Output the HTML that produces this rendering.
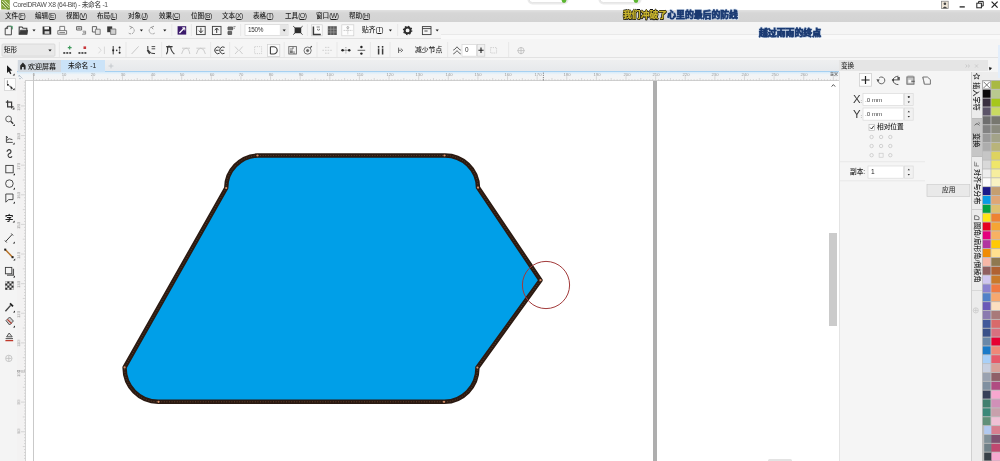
<!DOCTYPE html>
<html lang="zh"><head><meta charset="utf-8"><title>CorelDRAW X8 (64-Bit) - 未命名 -1</title>
<style>
html,body{margin:0;padding:0;background:#f5f5f5;}
body{width:1000px;height:461px;overflow:hidden;position:relative;font-family:"Liberation Sans","Noto Sans CJK SC",sans-serif;color:#333;font-weight:500;}
.a{position:absolute;}
.t{position:absolute;white-space:nowrap;line-height:1;will-change:transform;}
.m{font-size:6.6px;color:#222;}
.m i{font-style:normal;letter-spacing:-0.45px;}
svg{position:absolute;left:0;top:0;overflow:visible;}
</style></head><body>

<div class="a" style="left:0px;top:0px;width:1000px;height:10px;background:#ffffff;"></div>
<div class="a" style="left:0px;top:10px;width:1000px;height:12px;background:linear-gradient(#e2e2e2 0%,#d6d6d6 25%,#d3d3d3 100%);"></div>
<div class="a" style="left:0px;top:22px;width:1000px;height:38px;background:#f5f5f5;"></div>
<div class="a" style="left:0px;top:37.5px;width:1000px;height:0.8px;background:#e0e0e0;"></div>
<div class="a" style="left:441px;top:34px;width:559px;height:3.5px;background:#f9f9f9;border-top:0.6px solid #e9e9e9;"></div>
<div class="a" style="left:0px;top:57.3px;width:1000px;height:0.7px;background:#e2e2e2;"></div>
<div class="a" style="left:0px;top:58px;width:16.8px;height:403px;background:#f4f4f4;"></div>
<div class="a" style="left:16.8px;top:59.6px;width:822.2px;height:12.4px;background:linear-gradient(#eeeff0,#e6e8eb);"></div>
<div class="a" style="left:16.8px;top:71.2px;width:822.2px;height:1.3px;background:#a6d1f2;"></div>
<div class="a" style="left:18px;top:60px;width:42.5px;height:11.6px;background:#d3d9e0;"></div>
<div class="a" style="left:61px;top:60px;width:43.5px;height:11.6px;background:#cbe3f8;"></div>
<div class="a" style="left:16.8px;top:72.4px;width:822.2px;height:8.2px;background:linear-gradient(#d6ebfa 0%,#f1f4f6 30%,#f5f4f4 100%);"></div>
<div class="a" style="left:25.4px;top:80.1px;width:813.6px;height:0.7px;background:#cfcfcf;"></div>
<div class="a" style="left:16.8px;top:80.6px;width:8.6px;height:381px;background:#f3f2f2;"></div>
<div class="a" style="left:25px;top:80.6px;width:0.7px;height:381px;background:#d4d4d4;"></div>
<div class="a" style="left:25.7px;top:80.8px;width:813.3px;height:381px;background:#ffffff;"></div>
<div class="a" style="left:33.2px;top:72.5px;width:0.8px;height:389px;background:#c9c9c9;"></div>
<div class="a" style="left:653.2px;top:80.6px;width:3.9px;height:381px;background:#aeaeae;"></div>
<div class="a" style="left:768px;top:458.6px;width:24px;height:3px;background:#e3e3e3;border-radius:1.5px 1.5px 0 0;"></div>
<div class="a" style="left:829.4px;top:232.8px;width:7.8px;height:93px;background:#cbcbcb;"></div>
<div class="a" style="left:839px;top:58px;width:132.5px;height:403px;background:#f5f5f5;"></div>
<div class="a" style="left:839px;top:60.2px;width:149px;height:11px;background:#e5e5e5;"></div>
<div class="a" style="left:838.6px;top:72px;width:0.8px;height:389px;background:#e4e4e4;"></div>
<div class="a" style="left:971.3px;top:72px;width:10.7px;height:389px;background:#ececec;border-left:0.8px solid #d0d0d0;"></div>
<div class="a" style="left:972px;top:118.6px;width:10px;height:37.5px;background:#c6c6c6;"></div>
<div class="a" style="left:972px;top:117.9px;width:10px;height:0.7px;background:#bdbdbd;"></div>
<div class="a" style="left:972px;top:156.1px;width:10px;height:0.7px;background:#bdbdbd;"></div>
<div class="a" style="left:972px;top:209px;width:10px;height:0.7px;background:#cfcfcf;"></div>
<div class="a" style="left:972px;top:290px;width:10px;height:0.7px;background:#d8d8d8;"></div>
<div class="a" style="left:982px;top:72px;width:18px;height:9px;background:#ededed;"></div>
<div class="a" style="left:982.4px;top:80.4px;width:17.6px;height:381px;background:#bdbdbd;"></div>
<div class="a" style="left:988px;top:58px;width:12px;height:14px;background:#f5f5f5;"></div>
<div class="a" style="left:998px;top:45px;width:2px;height:33px;background:#e3eefb;"></div>
<svg width="1000" height="461" viewBox="0 0 1000 461">
<rect x="982.8" y="80.9" width="7.7" height="7.95" fill="#fff" stroke="#888" stroke-width="0.5"/><rect x="991.4" y="80.9" width="8.6" height="7.95" fill="#a9b944"/><rect x="982.8" y="89.75" width="7.7" height="7.95" fill="#0d0b0c"/><rect x="991.4" y="89.75" width="8.6" height="7.95" fill="#b9c98f"/><rect x="982.8" y="98.6" width="7.7" height="7.95" fill="#3a3040"/><rect x="991.4" y="98.6" width="8.6" height="7.95" fill="#a6c71c"/><rect x="982.8" y="107.45" width="7.7" height="7.95" fill="#5c5468"/><rect x="991.4" y="107.45" width="8.6" height="7.95" fill="#c9da62"/><rect x="982.8" y="116.3" width="7.7" height="7.95" fill="#6e6e6e"/><rect x="991.4" y="116.3" width="8.6" height="7.95" fill="#77776f"/><rect x="982.8" y="125.15" width="7.7" height="7.95" fill="#828282"/><rect x="991.4" y="125.15" width="8.6" height="7.95" fill="#8b8b7f"/><rect x="982.8" y="134" width="7.7" height="7.95" fill="#9a9a9a"/><rect x="991.4" y="134" width="8.6" height="7.95" fill="#a3a389"/><rect x="982.8" y="142.85" width="7.7" height="7.95" fill="#adadad"/><rect x="991.4" y="142.85" width="8.6" height="7.95" fill="#b9b47a"/><rect x="982.8" y="151.7" width="7.7" height="7.95" fill="#c6c6c6"/><rect x="991.4" y="151.7" width="8.6" height="7.95" fill="#ddd35f"/><rect x="982.8" y="160.55" width="7.7" height="7.95" fill="#d9d9d9"/><rect x="991.4" y="160.55" width="8.6" height="7.95" fill="#efe66a"/><rect x="982.8" y="169.4" width="7.7" height="7.95" fill="#ededed"/><rect x="991.4" y="169.4" width="8.6" height="7.95" fill="#f6ee9e"/><rect x="982.8" y="178.25" width="7.7" height="7.95" fill="#fdfdfd"/><rect x="991.4" y="178.25" width="8.6" height="7.95" fill="#f9f3c2"/><rect x="982.8" y="187.1" width="7.7" height="7.95" fill="#1b1b8a"/><rect x="991.4" y="187.1" width="8.6" height="7.95" fill="#c59f70"/><rect x="982.8" y="195.95" width="7.7" height="7.95" fill="#0a9ae4"/><rect x="991.4" y="195.95" width="8.6" height="7.95" fill="#dfa676"/><rect x="982.8" y="204.8" width="7.7" height="7.95" fill="#04a040"/><rect x="991.4" y="204.8" width="8.6" height="7.95" fill="#dfc070"/><rect x="982.8" y="213.65" width="7.7" height="7.95" fill="#ffe516"/><rect x="991.4" y="213.65" width="8.6" height="7.95" fill="#ee8233"/><rect x="982.8" y="222.5" width="7.7" height="7.95" fill="#e6001f"/><rect x="991.4" y="222.5" width="8.6" height="7.95" fill="#f5a534"/><rect x="982.8" y="231.35" width="7.7" height="7.95" fill="#e5007d"/><rect x="991.4" y="231.35" width="8.6" height="7.95" fill="#f7b163"/><rect x="982.8" y="240.2" width="7.7" height="7.95" fill="#b135a0"/><rect x="991.4" y="240.2" width="8.6" height="7.95" fill="#ffc906"/><rect x="982.8" y="249.05" width="7.7" height="7.95" fill="#f08c05"/><rect x="991.4" y="249.05" width="8.6" height="7.95" fill="#ffe08f"/><rect x="982.8" y="257.9" width="7.7" height="7.95" fill="#f7b7a7"/><rect x="991.4" y="257.9" width="8.6" height="7.95" fill="#8f7950"/><rect x="982.8" y="266.75" width="7.7" height="7.95" fill="#905f5f"/><rect x="991.4" y="266.75" width="8.6" height="7.95" fill="#b06232"/><rect x="982.8" y="275.6" width="7.7" height="7.95" fill="#d0c7f0"/><rect x="991.4" y="275.6" width="8.6" height="7.95" fill="#c97a2a"/><rect x="982.8" y="284.45" width="7.7" height="7.95" fill="#8a82d0"/><rect x="991.4" y="284.45" width="8.6" height="7.95" fill="#f07a42"/><rect x="982.8" y="293.3" width="7.7" height="7.95" fill="#5281c8"/><rect x="991.4" y="293.3" width="8.6" height="7.95" fill="#f7a86f"/><rect x="982.8" y="302.15" width="7.7" height="7.95" fill="#6a5ab8"/><rect x="991.4" y="302.15" width="8.6" height="7.95" fill="#fcdfc0"/><rect x="982.8" y="311" width="7.7" height="7.95" fill="#8a7ab0"/><rect x="991.4" y="311" width="8.6" height="7.95" fill="#a87a7a"/><rect x="982.8" y="319.85" width="7.7" height="7.95" fill="#42599a"/><rect x="991.4" y="319.85" width="8.6" height="7.95" fill="#d86a6a"/><rect x="982.8" y="328.7" width="7.7" height="7.95" fill="#3a5088"/><rect x="991.4" y="328.7" width="8.6" height="7.95" fill="#d8707f"/><rect x="982.8" y="337.55" width="7.7" height="7.95" fill="#6a88a8"/><rect x="991.4" y="337.55" width="8.6" height="7.95" fill="#e60032"/><rect x="982.8" y="346.4" width="7.7" height="7.95" fill="#1a7ac8"/><rect x="991.4" y="346.4" width="8.6" height="7.95" fill="#ef8878"/><rect x="982.8" y="355.25" width="7.7" height="7.95" fill="#a9d0f7"/><rect x="991.4" y="355.25" width="8.6" height="7.95" fill="#e65a6a"/><rect x="982.8" y="364.1" width="7.7" height="7.95" fill="#c8d0e0"/><rect x="991.4" y="364.1" width="8.6" height="7.95" fill="#d8a098"/><rect x="982.8" y="372.95" width="7.7" height="7.95" fill="#9aa2b0"/><rect x="991.4" y="372.95" width="8.6" height="7.95" fill="#906068"/><rect x="982.8" y="381.8" width="7.7" height="7.95" fill="#8090a0"/><rect x="991.4" y="381.8" width="8.6" height="7.95" fill="#b04c82"/><rect x="982.8" y="390.65" width="7.7" height="7.95" fill="#384058"/><rect x="991.4" y="390.65" width="8.6" height="7.95" fill="#f7a7cf"/><rect x="982.8" y="399.5" width="7.7" height="7.95" fill="#41806f"/><rect x="991.4" y="399.5" width="8.6" height="7.95" fill="#d090b8"/><rect x="982.8" y="408.35" width="7.7" height="7.95" fill="#3a8878"/><rect x="991.4" y="408.35" width="8.6" height="7.95" fill="#c8a0ac"/><rect x="982.8" y="417.2" width="7.7" height="7.95" fill="#609078"/><rect x="991.4" y="417.2" width="8.6" height="7.95" fill="#f0c0d5"/><rect x="984.2" y="426.05" width="7.7" height="7.95" fill="#b2caf0"/><rect x="991.4" y="426.05" width="8.6" height="7.95" fill="#d87f90"/><rect x="984.2" y="434.9" width="7.7" height="7.95" fill="#809098"/><rect x="991.4" y="434.9" width="8.6" height="7.95" fill="#805070"/><rect x="984.2" y="443.75" width="7.7" height="7.95" fill="#708088"/><rect x="991.4" y="443.75" width="8.6" height="7.95" fill="#c04870"/><rect x="984.2" y="452.6" width="7.7" height="7.95" fill="#384048"/><rect x="991.4" y="452.6" width="8.6" height="7.95" fill="#f7a7cf"/><rect x="984.2" y="461.45" width="7.7" height="7.95" fill="#555"/><rect x="991.4" y="461.45" width="8.6" height="7.95" fill="#999"/>
<path d="M983.6 81.8 L989.8 88 M989.8 81.8 L983.6 88" stroke="#555" stroke-width="0.8" fill="none"/>
<path d="M257.5 155.5 L444.5 155.5 A33 32.6 0 0 1 478 187.6 L540.5 280.2 L477.4 367.6 A33 33.6 0 0 1 444 401.8 L158.5 401.8 A33.6 33.8 0 0 1 124.6 367.4 L226.2 188 A33 32.6 0 0 1 257.5 155.5 Z" fill="#009fe8" stroke="#2a1a12" stroke-width="4.4" stroke-linejoin="round"/>
<path d="M257.5 155.5 L444.5 155.5 A33 32.6 0 0 1 478 187.6 L540.5 280.2 L477.4 367.6 A33 33.6 0 0 1 444 401.8 L158.5 401.8 A33.6 33.8 0 0 1 124.6 367.4 L226.2 188 A33 32.6 0 0 1 257.5 155.5 Z" fill="none" stroke="#8a5a3c" stroke-width="0.7" stroke-dasharray="1 1.6" opacity="0.8"/>
<circle cx="257.5" cy="155.5" r="1.1" fill="#d8906a"/>
<circle cx="444.5" cy="155.5" r="1.1" fill="#d8906a"/>
<circle cx="478" cy="187.6" r="1.1" fill="#d8906a"/>
<circle cx="540.5" cy="280.2" r="1.1" fill="#d8906a"/>
<circle cx="477.4" cy="367.6" r="1.1" fill="#d8906a"/>
<circle cx="444" cy="401.8" r="1.1" fill="#d8906a"/>
<circle cx="158.5" cy="401.8" r="1.1" fill="#d8906a"/>
<circle cx="124.6" cy="367.4" r="1.1" fill="#d8906a"/>
<circle cx="226.2" cy="188" r="1.1" fill="#d8906a"/>
<circle cx="546" cy="285" r="23.6" fill="none" stroke="#a23a3a" stroke-width="1"/>
<path d="M1.2 0 H9.8 V9.4 H1.2 Z" fill="#86a83e"/>
<path d="M1.2 0 L9.8 8.6 V9.4 H7 L1.2 3.4 Z" fill="#6d8f2f"/>
<path d="M2 1 L8.6 7.8 M4.4 0.6 L9.4 5.6 M1.6 3.6 L6.4 8.6" stroke="#e9f2d4" stroke-width="0.9" fill="none"/>
<rect x="528.4" y="-6" width="39.2" height="9.4" rx="4" fill="#fff" stroke="#ececec" stroke-width="2"/>
<rect x="599.4" y="-6" width="41.2" height="9.4" rx="4" fill="#fff" stroke="#ececec" stroke-width="2"/>
<rect x="529" y="-6" width="38" height="8.6" rx="3.5" fill="#fff" stroke="#dcdcdc" stroke-width="0.8"/>
<rect x="600" y="-6" width="40" height="8.6" rx="3.5" fill="#fff" stroke="#dcdcdc" stroke-width="0.8"/>
<circle cx="564" cy="0.6" r="2.3" fill="#5cb531"/><circle cx="636" cy="0.6" r="2.3" fill="#5cb531"/>
<rect x="941.6" y="1.2" width="6.6" height="7.4" fill="#efe6d8" stroke="#7a7a7a" stroke-width="0.7"/>
<circle cx="944.9" cy="3.8" r="1.3" fill="#444"/><path d="M942.6 8.2 Q944.9 4.6 947.2 8.2 Z" fill="#444"/>
<path d="M959.6 6.9 H964.8" stroke="#222" stroke-width="1.3"/>
<rect x="976.8" y="3.2" width="4.6" height="4.6" fill="none" stroke="#222" stroke-width="1"/><path d="M978.6 3 V1.4 H983.2 V6 H981.6" fill="none" stroke="#222" stroke-width="1"/>
<path d="M991.6 1.6 L997.6 7.6 M997.6 1.6 L991.6 7.6" stroke="#222" stroke-width="1.2"/>
<path d="M5.2 34.8 V28.6 L7.6 26.2 H11.4 V34.8 Z M5.2 28.6 H7.6 V26.2" stroke="#3b3b3b" stroke-width="0.9" fill="none" />
<path d="M9.6 26.4 H12.4 V29.4" stroke="#4aa36a" stroke-width="0.9" fill="none" />
<path d="M19.2 34.2 V27 H22 L23 28.2 H26.8 V34.2 Z" stroke="#3b3b3b" stroke-width="1.1" fill="none" />
<path d="M19.2 34.2 L20.6 30.2 H27.6 L26.8 34.2" stroke="#3b3b3b" stroke-width="0.8" fill="#3b3b3b" />
<path d="M32.432 29.4376 L35.568 29.4376 L34 31.476 Z" fill="#1c1c1c"/>
<path d="M42.6 26.4 H50 L51.2 27.6 V34.4 H42.6 Z" fill="#2e2e2e"/>
<rect x="44.4" y="26.8" width="4.6" height="2.6" fill="#f5f5f5"/><rect x="44.6" y="31.2" width="4.8" height="2.6" fill="#d8d8d8"/>
<path d="M59.8 30.6 V26.4 H64.6 V30.6 M57.8 30.6 H66.6 V34.2 H57.8 Z M59.4 32.6 H65" stroke="#6f6f6f" stroke-width="0.9" fill="none" />
<path d="M76.6 26.6 H81.6 V30 H76.6 Z M77.6 28.2 H80.6" stroke="#5a5a5a" stroke-width="0.9" fill="none" />
<path d="M82.6 31.2 H85.6 V34.2 H82 M83 32.8 H85.4" stroke="#777" stroke-width="0.8" fill="none" />
<path d="M92.4 26.6 H96.6 V32 H92.4 Z" stroke="#555" stroke-width="0.9" fill="none" />
<path d="M95.4 29.2 H100.2 V34.4 H95.4 Z" stroke="#777" stroke-width="0.9" fill="#e4e4e4" />
<rect x="107.2" y="26.4" width="5" height="5.8" fill="#3a3a3a"/>
<path d="M110.6 29 H115.8 V34.4 H110.6 Z" stroke="#777" stroke-width="0.9" fill="#d0d0d0" />
<path d="M131.8 27.2 A3.4 3.4 0 1 1 128.2 32.6" stroke="#9a9a9a" stroke-width="1" fill="none" stroke-dasharray="2.2 0.9"/>
<path d="M129.4 26.2 L131.9 27.3 L130.2 29.2" stroke="#8a8a8a" stroke-width="0.9" fill="none" />
<path d="M139.832 29.5376 L142.968 29.5376 L141.4 31.576 Z" fill="#1c1c1c"/>
<path d="M151.6 27.2 A3.4 3.4 0 1 0 155.2 32.6" stroke="#9a9a9a" stroke-width="1" fill="none" stroke-dasharray="2.2 0.9"/>
<path d="M154 26.2 L151.5 27.3 L153.2 29.2" stroke="#8a8a8a" stroke-width="0.9" fill="none" />
<path d="M163.232 29.5376 L166.368 29.5376 L164.8 31.576 Z" fill="#1c1c1c"/>
<path d="M171.8 24 V36" stroke="#e2e2e2" stroke-width="0.7"/>
<rect x="177.6" y="26.2" width="8.6" height="8.4" fill="#3b1a6b"/>
<path d="M179.4 33 L184.6 27.8" stroke="#fff" stroke-width="1.3" fill="none" />
<path d="M182.2 27.8 H184.8 V30.4" stroke="#fff" stroke-width="0.9" fill="none" />
<path d="M191.4 24 V36" stroke="#e2e2e2" stroke-width="0.7"/>
<rect x="196.6" y="26.4" width="8.6" height="8.2" stroke="#3b3b3b" stroke-width="0.9" fill="none" />
<path d="M200.9 27.8 V32.4 M199 30.6 L200.9 32.8 L202.8 30.6" stroke="#3b3b3b" stroke-width="1" fill="none" />
<rect x="212.4" y="26.4" width="8.6" height="8.2" stroke="#3b3b3b" stroke-width="0.9" fill="none" />
<path d="M216.7 33 V28.4 M214.8 30.2 L216.7 28 L218.6 30.2" stroke="#3b3b3b" stroke-width="1" fill="none" />
<path d="M228 27 H232.6 V29.8 H228 Z M228 31.4 H231.6 V34.4 H228 Z" stroke="#555" stroke-width="0.9" fill="#6a6a6a" />
<path d="M233.4 26.6 H235.6 M233.4 28.2 H235" stroke="#777" stroke-width="0.8" fill="none" />
<path d="M240.6 24 V36" stroke="#e2e2e2" stroke-width="0.7"/>
<rect x="245" y="24.6" width="43" height="11" fill="#fff" stroke="#d4d4d4" stroke-width="0.7"/>
<rect x="279.8" y="25" width="8" height="10.3" fill="#e6e6e6"/>
<path d="M282.632 29.4376 L285.768 29.4376 L284.2 31.476 Z" fill="#1c1c1c"/>
<rect x="294.6" y="27.4" width="6.6" height="5.8" fill="#2c2c2c"/>
<path d="M293.2 26.2 L295 27.8 M302.6 26.2 L300.8 27.8 M293.2 34.6 L295 33 M302.6 34.6 L300.8 33" stroke="#3b3b3b" stroke-width="0.9" fill="none" />
<path d="M307.4 24 V36" stroke="#e2e2e2" stroke-width="0.7"/>
<rect x="311.4" y="24.8" width="10.8" height="11" fill="#fdfdfd" stroke="#cfcfcf" stroke-width="0.7"/>
<path d="M313.4 26.4 V34.4 H320.8" stroke="#3b3b3b" stroke-width="1.5" fill="none" />
<path d="M316.6 27 H319.8 M317.6 28.8 A1 1 0 1 0 319.4 28.8" stroke="#666" stroke-width="0.8" fill="none" />
<rect x="327.8" y="26.2" width="9" height="8.8" fill="#5a5a5a"/>
<path d="M330.8 26.2 V35 M333.8 26.2 V35 M327.8 29.2 H336.8 M327.8 32 H336.8" stroke="#a8a8a8" stroke-width="0.6" fill="none" />
<rect x="341.8" y="24.8" width="12" height="11" fill="#fdfdfd" stroke="#cfcfcf" stroke-width="0.7"/>
<path d="M347.8 26.4 V34.6 M343.6 30.4 H352.4" stroke="#b4b4b4" stroke-width="0.8" fill="none" stroke-dasharray="1.2 0.8"/>
<circle cx="347.8" cy="27.6" r="1" stroke="#9a9a9a" stroke-width="0.7" fill="none"/>
<path d="M388.832 29.5376 L391.968 29.5376 L390.4 31.576 Z" fill="#1c1c1c"/>
<path d="M397.6 24 V36" stroke="#e2e2e2" stroke-width="0.7"/>
<circle cx="407.6" cy="30.4" r="2.9" stroke="#2c2c2c" stroke-width="1.9" fill="none"/>
<circle cx="407.6" cy="30.4" r="4.1" fill="none" stroke="#2c2c2c" stroke-width="1.3" stroke-dasharray="1.4 1.82"/>
<rect x="422.4" y="26.6" width="8.6" height="8" stroke="#3b3b3b" stroke-width="0.9" fill="none" />
<path d="M422.4 28.6 H431 M424.4 31 H427.6" stroke="#3b3b3b" stroke-width="0.9" fill="none" />
<path d="M435.632 29.5376 L438.768 29.5376 L437.2 31.576 Z" fill="#1c1c1c"/>
<rect x="2" y="44" width="53" height="12.2" rx="1" fill="#e9e9e9" stroke="#d2d2d2" stroke-width="0.7"/>
<path d="M48.32 49.376 L51.68 49.376 L50 51.56 Z" fill="#1c1c1c"/>
<path d="M59.4 42 V57" stroke="#e2e2e2" stroke-width="0.7"/>
<path d="M69.7 45.8 V49.6 M67.8 47.7 H71.6" stroke="#3f9a5c" stroke-width="1.2" fill="none" />
<rect x="63.35" y="52.1" width="1.7" height="1.7" fill="#3a3a3a"/>
<rect x="66.35" y="52.1" width="1.7" height="1.7" fill="#3a3a3a"/>
<rect x="69.35" y="52.1" width="1.7" height="1.7" fill="#3a3a3a"/>
<path d="M63.2 53 H71.2" stroke="#6a6a6a" stroke-width="0.5" fill="none" />
<rect x="83.5" y="46.4" width="2.6" height="2.6" fill="#c8363a"/>
<rect x="78.55" y="52.1" width="1.7" height="1.7" fill="#3a3a3a"/>
<rect x="81.55" y="52.1" width="1.7" height="1.7" fill="#3a3a3a"/>
<rect x="84.55" y="52.1" width="1.7" height="1.7" fill="#3a3a3a"/>
<path d="M78.4 53 H86.4" stroke="#6a6a6a" stroke-width="0.5" fill="none" />
<path d="M98.4 47 L101.2 50.2 L98.4 53.4 M104.4 46.6 V54" stroke="#d6d6d6" stroke-width="0.9" fill="none" />
<path d="M113.2 46 V54.4" stroke="#3b3b3b" stroke-width="1" fill="none" />
<rect x="112.3" y="49.4" width="1.8" height="1.8" fill="#222"/>
<circle cx="116.7" cy="50.4" r="0.8" fill="#333"/><circle cx="119.6" cy="47.4" r="1" fill="#222"/><circle cx="119.6" cy="52.8" r="1" fill="#222"/>
<path d="M119.6 48.6 V51.6" stroke="#555" stroke-width="0.7" fill="none" />
<path d="M126 42 V57" stroke="#e2e2e2" stroke-width="0.7"/>
<path d="M131.6 54 L138.6 46.4" stroke="#c8c8c8" stroke-width="1" fill="none" />
<path d="M147.8 46 V49.4 L149.4 51.4 Q151 54 155 53.6" stroke="#3b3b3b" stroke-width="1" fill="none" />
<path d="M151.6 46.6 H155.2 M151.6 48.8 H155.2" stroke="#3b3b3b" stroke-width="0.9" fill="none" />
<path d="M147.4 50 L149.8 53.8" stroke="#3b3b3b" stroke-width="1.6" fill="none" />
<path d="M161.6 42 V57" stroke="#e2e2e2" stroke-width="0.7"/>
<path d="M166.2 46.6 H172.6 M167.4 46.6 Q168.4 51 166.4 54.2 M170.8 46.6 Q170.2 50 174.4 54.2 M169 45.6 V48" stroke="#3b3b3b" stroke-width="1.1" fill="none" />
<path d="M181.6 54 Q183 48.2 186 48.2 Q189 48.2 189.8 54 M182 48.2 H190" stroke="#c8c8c8" stroke-width="0.9" fill="none" />
<path d="M196.4 54 Q197.6 48.2 200.8 48.2 Q204 48.2 205.4 54 M196.4 48.2 H205.4" stroke="#c8c8c8" stroke-width="0.9" fill="none" />
<path d="M210.6 42 V57" stroke="#e2e2e2" stroke-width="0.7"/>
<path d="M219.6 47.4 A3.2 3.4 0 1 0 219.6 53.2 M215.6 50.3 H218.6" stroke="#3b3b3b" stroke-width="1" fill="none" />
<path d="M224.6 47.4 A3.2 3.4 0 1 0 224.6 53.2 M220.8 50.3 H223.6" stroke="#3b3b3b" stroke-width="1" fill="none" />
<path d="M229.6 42 V57" stroke="#e2e2e2" stroke-width="0.7"/>
<path d="M235 46.6 L238.4 50.3 L235 54 M242.6 46.6 L239.4 50.3 L242.6 54" stroke="#c8c8c8" stroke-width="0.9" fill="none" />
<rect x="254.6" y="46.6" width="7" height="7" fill="none" stroke="#c8c8c8" stroke-width="0.8" stroke-dasharray="1.2 1"/>
<rect x="267.6" y="44.4" width="12.2" height="12" fill="#fbfbfb" stroke="#cfcfcf" stroke-width="0.7"/>
<path d="M270.4 46.8 V54 M270.4 46.8 H273.6 A3.6 3.6 0 0 1 273.6 54 H270.4" stroke="#3b3b3b" stroke-width="1.1" fill="none" />
<path d="M284.2 42 V57" stroke="#e2e2e2" stroke-width="0.7"/>
<rect x="288.8" y="46.6" width="7.6" height="7.4" stroke="#666" stroke-width="0.9" fill="none" />
<path d="M290 49 H293 V46.8 M294 54 V51.2" stroke="#555" stroke-width="0.8" fill="none" />
<rect x="289.8" y="50.4" width="3" height="2.8" fill="#777"/>
<circle cx="307.6" cy="50.6" r="3.6" stroke="#666" stroke-width="0.9" fill="none"/>
<circle cx="307.6" cy="50.6" r="1.1" stroke="#555" stroke-width="0.8" fill="#666"/>
<path d="M310.4 47.6 L311.8 46.2" stroke="#444" stroke-width="1.1" fill="none" />
<path d="M317 42 V57" stroke="#e2e2e2" stroke-width="0.7"/>
<path d="M322.4 50.3 H332.4 M325 47.4 H330 M325 53.2 H330" stroke="#c8c8c8" stroke-width="0.8" fill="none" stroke-dasharray="1.6 1"/>
<path d="M337 42 V57" stroke="#e2e2e2" stroke-width="0.7"/>
<path d="M341.2 50.3 H350.6" stroke="#666" stroke-width="0.7" fill="none" />
<circle cx="342.6" cy="50.3" r="1.2" fill="#222"/><circle cx="349.2" cy="50.3" r="1.2" fill="#222"/>
<path d="M345.9 47 V53.6" stroke="#777" stroke-width="0.7" fill="none" stroke-dasharray="1 0.8"/>
<path d="M357.6 50.3 H365.2" stroke="#555" stroke-width="0.9" fill="none" />
<circle cx="361.4" cy="47" r="1.2" fill="#222"/><circle cx="361.4" cy="53.6" r="1.2" fill="#222"/>
<path d="M370.4 42 V57" stroke="#e2e2e2" stroke-width="0.7"/>
<path d="M378.6 48.6 V54.6 M382.6 48.6 V54.6" stroke="#3b3b3b" stroke-width="1.5" fill="none" />
<circle cx="378.6" cy="46.8" r="0.9" fill="#222"/><circle cx="382.6" cy="46.8" r="0.9" fill="#222"/>
<path d="M390 42 V57" stroke="#e2e2e2" stroke-width="0.7"/>
<path d="M398.6 47.6 V53 M398.6 50.3 H401 M400.8 48.6 L402.8 50.3 L400.8 52" stroke="#555" stroke-width="0.9" fill="none" />
<path d="M447.6 42 V57" stroke="#e2e2e2" stroke-width="0.7"/>
<path d="M453.2 50.2 Q455 49.6 457 46.8 Q459 49.6 460.8 50.2 M453.2 54 Q455 53.4 457 50.6 Q459 53.4 460.8 54" stroke="#555" stroke-width="0.9" fill="none" />
<rect x="462" y="44.6" width="14.6" height="11.6" fill="#fff" stroke="#d6d6d6" stroke-width="0.7"/>
<rect x="477.2" y="44.6" width="7.6" height="11.6" fill="#f0f0f0" stroke="#cfcfcf" stroke-width="0.7"/>
<path d="M481 47.6 V53 M478.4 50.3 H483.6" stroke="#222" stroke-width="1.1" fill="none" />
<rect x="490.6" y="47.6" width="6" height="5.4" fill="none" stroke="#c4c4c4" stroke-width="0.8" stroke-dasharray="1.2 1"/>
<path d="M508.6 42 V57" stroke="#e2e2e2" stroke-width="0.7"/>
<circle cx="521" cy="50.6" r="3.1" stroke="#bdbdbd" stroke-width="0.8" fill="none"/>
<path d="M521 47 V54.2 M517.4 50.6 H524.6" stroke="#bdbdbd" stroke-width="0.8" fill="none" />
<path d="M20.2 65.6 L22.9 62.6 L25.6 65.6 V69.4 H23.8 V67 H22 V69.4 H20.2 Z" fill="#2a2a2a"/>
<path d="M111 63.6 V68.4 M108.6 66 H113.4" stroke="#c2c6ca" stroke-width="0.9" fill="none" />
<path d="M33.60 76.2 V80.4 M36.56 79.2 V80.4 M39.52 79.2 V80.4 M42.49 79.2 V80.4 M45.45 79.2 V80.4 M48.41 78.0 V80.4 M51.37 79.2 V80.4 M54.33 79.2 V80.4 M57.30 79.2 V80.4 M60.26 79.2 V80.4 M63.22 76.2 V80.4 M66.18 79.2 V80.4 M69.14 79.2 V80.4 M72.11 79.2 V80.4 M75.07 79.2 V80.4 M78.03 78.0 V80.4 M80.99 79.2 V80.4 M83.95 79.2 V80.4 M86.92 79.2 V80.4 M89.88 79.2 V80.4 M92.84 76.2 V80.4 M95.80 79.2 V80.4 M98.76 79.2 V80.4 M101.73 79.2 V80.4 M104.69 79.2 V80.4 M107.65 78.0 V80.4 M110.61 79.2 V80.4 M113.57 79.2 V80.4 M116.54 79.2 V80.4 M119.50 79.2 V80.4 M122.46 76.2 V80.4 M125.42 79.2 V80.4 M128.38 79.2 V80.4 M131.35 79.2 V80.4 M134.31 79.2 V80.4 M137.27 78.0 V80.4 M140.23 79.2 V80.4 M143.19 79.2 V80.4 M146.16 79.2 V80.4 M149.12 79.2 V80.4 M152.08 76.2 V80.4 M155.04 79.2 V80.4 M158.00 79.2 V80.4 M160.97 79.2 V80.4 M163.93 79.2 V80.4 M166.89 78.0 V80.4 M169.85 79.2 V80.4 M172.81 79.2 V80.4 M175.78 79.2 V80.4 M178.74 79.2 V80.4 M181.70 76.2 V80.4 M184.66 79.2 V80.4 M187.62 79.2 V80.4 M190.59 79.2 V80.4 M193.55 79.2 V80.4 M196.51 78.0 V80.4 M199.47 79.2 V80.4 M202.43 79.2 V80.4 M205.40 79.2 V80.4 M208.36 79.2 V80.4 M211.32 76.2 V80.4 M214.28 79.2 V80.4 M217.24 79.2 V80.4 M220.21 79.2 V80.4 M223.17 79.2 V80.4 M226.13 78.0 V80.4 M229.09 79.2 V80.4 M232.05 79.2 V80.4 M235.02 79.2 V80.4 M237.98 79.2 V80.4 M240.94 76.2 V80.4 M243.90 79.2 V80.4 M246.86 79.2 V80.4 M249.83 79.2 V80.4 M252.79 79.2 V80.4 M255.75 78.0 V80.4 M258.71 79.2 V80.4 M261.67 79.2 V80.4 M264.64 79.2 V80.4 M267.60 79.2 V80.4 M270.56 76.2 V80.4 M273.52 79.2 V80.4 M276.48 79.2 V80.4 M279.45 79.2 V80.4 M282.41 79.2 V80.4 M285.37 78.0 V80.4 M288.33 79.2 V80.4 M291.29 79.2 V80.4 M294.26 79.2 V80.4 M297.22 79.2 V80.4 M300.18 76.2 V80.4 M303.14 79.2 V80.4 M306.10 79.2 V80.4 M309.07 79.2 V80.4 M312.03 79.2 V80.4 M314.99 78.0 V80.4 M317.95 79.2 V80.4 M320.91 79.2 V80.4 M323.88 79.2 V80.4 M326.84 79.2 V80.4 M329.80 76.2 V80.4 M332.76 79.2 V80.4 M335.72 79.2 V80.4 M338.69 79.2 V80.4 M341.65 79.2 V80.4 M344.61 78.0 V80.4 M347.57 79.2 V80.4 M350.53 79.2 V80.4 M353.50 79.2 V80.4 M356.46 79.2 V80.4 M359.42 76.2 V80.4 M362.38 79.2 V80.4 M365.34 79.2 V80.4 M368.31 79.2 V80.4 M371.27 79.2 V80.4 M374.23 78.0 V80.4 M377.19 79.2 V80.4 M380.15 79.2 V80.4 M383.12 79.2 V80.4 M386.08 79.2 V80.4 M389.04 76.2 V80.4 M392.00 79.2 V80.4 M394.96 79.2 V80.4 M397.93 79.2 V80.4 M400.89 79.2 V80.4 M403.85 78.0 V80.4 M406.81 79.2 V80.4 M409.77 79.2 V80.4 M412.74 79.2 V80.4 M415.70 79.2 V80.4 M418.66 76.2 V80.4 M421.62 79.2 V80.4 M424.58 79.2 V80.4 M427.55 79.2 V80.4 M430.51 79.2 V80.4 M433.47 78.0 V80.4 M436.43 79.2 V80.4 M439.39 79.2 V80.4 M442.36 79.2 V80.4 M445.32 79.2 V80.4 M448.28 76.2 V80.4 M451.24 79.2 V80.4 M454.20 79.2 V80.4 M457.17 79.2 V80.4 M460.13 79.2 V80.4 M463.09 78.0 V80.4 M466.05 79.2 V80.4 M469.01 79.2 V80.4 M471.98 79.2 V80.4 M474.94 79.2 V80.4 M477.90 76.2 V80.4 M480.86 79.2 V80.4 M483.82 79.2 V80.4 M486.79 79.2 V80.4 M489.75 79.2 V80.4 M492.71 78.0 V80.4 M495.67 79.2 V80.4 M498.63 79.2 V80.4 M501.60 79.2 V80.4 M504.56 79.2 V80.4 M507.52 76.2 V80.4 M510.48 79.2 V80.4 M513.44 79.2 V80.4 M516.41 79.2 V80.4 M519.37 79.2 V80.4 M522.33 78.0 V80.4 M525.29 79.2 V80.4 M528.25 79.2 V80.4 M531.22 79.2 V80.4 M534.18 79.2 V80.4 M537.14 76.2 V80.4 M540.10 79.2 V80.4 M543.06 79.2 V80.4 M546.03 79.2 V80.4 M548.99 79.2 V80.4 M551.95 78.0 V80.4 M554.91 79.2 V80.4 M557.87 79.2 V80.4 M560.84 79.2 V80.4 M563.80 79.2 V80.4 M566.76 76.2 V80.4 M569.72 79.2 V80.4 M572.68 79.2 V80.4 M575.65 79.2 V80.4 M578.61 79.2 V80.4 M581.57 78.0 V80.4 M584.53 79.2 V80.4 M587.49 79.2 V80.4 M590.46 79.2 V80.4 M593.42 79.2 V80.4 M596.38 76.2 V80.4 M599.34 79.2 V80.4 M602.30 79.2 V80.4 M605.27 79.2 V80.4 M608.23 79.2 V80.4 M611.19 78.0 V80.4 M614.15 79.2 V80.4 M617.11 79.2 V80.4 M620.08 79.2 V80.4 M623.04 79.2 V80.4 M626.00 76.2 V80.4 M628.96 79.2 V80.4 M631.92 79.2 V80.4 M634.89 79.2 V80.4 M637.85 79.2 V80.4 M640.81 78.0 V80.4 M643.77 79.2 V80.4 M646.73 79.2 V80.4 M649.70 79.2 V80.4 M652.66 79.2 V80.4 M655.62 76.2 V80.4 M658.58 79.2 V80.4 M661.54 79.2 V80.4 M664.51 79.2 V80.4 M667.47 79.2 V80.4 M670.43 78.0 V80.4 M673.39 79.2 V80.4 M676.35 79.2 V80.4 M679.32 79.2 V80.4 M682.28 79.2 V80.4 M685.24 76.2 V80.4 M688.20 79.2 V80.4 M691.16 79.2 V80.4 M694.13 79.2 V80.4 M697.09 79.2 V80.4 M700.05 78.0 V80.4 M703.01 79.2 V80.4 M705.97 79.2 V80.4 M708.94 79.2 V80.4 M711.90 79.2 V80.4 M714.86 76.2 V80.4 M717.82 79.2 V80.4 M720.78 79.2 V80.4 M723.75 79.2 V80.4 M726.71 79.2 V80.4 M729.67 78.0 V80.4 M732.63 79.2 V80.4 M735.59 79.2 V80.4 M738.56 79.2 V80.4 M741.52 79.2 V80.4 M744.48 76.2 V80.4 M747.44 79.2 V80.4 M750.40 79.2 V80.4 M753.37 79.2 V80.4 M756.33 79.2 V80.4 M759.29 78.0 V80.4 M762.25 79.2 V80.4 M765.21 79.2 V80.4 M768.18 79.2 V80.4 M771.14 79.2 V80.4 M774.10 76.2 V80.4 M777.06 79.2 V80.4 M780.02 79.2 V80.4 M782.99 79.2 V80.4 M785.95 79.2 V80.4 M788.91 78.0 V80.4 M791.87 79.2 V80.4 M794.83 79.2 V80.4 M797.80 79.2 V80.4 M800.76 79.2 V80.4 M803.72 76.2 V80.4 M806.68 79.2 V80.4 M809.64 79.2 V80.4 M812.61 79.2 V80.4 M815.57 79.2 V80.4 M818.53 78.0 V80.4 M821.49 79.2 V80.4 M824.45 79.2 V80.4 M827.42 79.2 V80.4 M830.38 79.2 V80.4 M833.34 76.2 V80.4 M836.30 79.2 V80.4" stroke="#b9b9b9" stroke-width="0.5" fill="none" />
<path d="M24.0 82.22 H25.2 M24.0 85.19 H25.2 M24.0 88.15 H25.2 M22.8 91.11 H25.2 M24.0 94.07 H25.2 M24.0 97.03 H25.2 M24.0 100.00 H25.2 M24.0 102.96 H25.2 M21.0 105.92 H25.2 M24.0 108.88 H25.2 M24.0 111.84 H25.2 M24.0 114.81 H25.2 M24.0 117.77 H25.2 M22.8 120.73 H25.2 M24.0 123.69 H25.2 M24.0 126.65 H25.2 M24.0 129.62 H25.2 M24.0 132.58 H25.2 M21.0 135.54 H25.2 M24.0 138.50 H25.2 M24.0 141.46 H25.2 M24.0 144.43 H25.2 M24.0 147.39 H25.2 M22.8 150.35 H25.2 M24.0 153.31 H25.2 M24.0 156.27 H25.2 M24.0 159.24 H25.2 M24.0 162.20 H25.2 M21.0 165.16 H25.2 M24.0 168.12 H25.2 M24.0 171.08 H25.2 M24.0 174.05 H25.2 M24.0 177.01 H25.2 M22.8 179.97 H25.2 M24.0 182.93 H25.2 M24.0 185.89 H25.2 M24.0 188.86 H25.2 M24.0 191.82 H25.2 M21.0 194.78 H25.2 M24.0 197.74 H25.2 M24.0 200.70 H25.2 M24.0 203.67 H25.2 M24.0 206.63 H25.2 M22.8 209.59 H25.2 M24.0 212.55 H25.2 M24.0 215.51 H25.2 M24.0 218.48 H25.2 M24.0 221.44 H25.2 M21.0 224.40 H25.2 M24.0 227.36 H25.2 M24.0 230.32 H25.2 M24.0 233.29 H25.2 M24.0 236.25 H25.2 M22.8 239.21 H25.2 M24.0 242.17 H25.2 M24.0 245.13 H25.2 M24.0 248.10 H25.2 M24.0 251.06 H25.2 M21.0 254.02 H25.2 M24.0 256.98 H25.2 M24.0 259.94 H25.2 M24.0 262.91 H25.2 M24.0 265.87 H25.2 M22.8 268.83 H25.2 M24.0 271.79 H25.2 M24.0 274.75 H25.2 M24.0 277.72 H25.2 M24.0 280.68 H25.2 M21.0 283.64 H25.2 M24.0 286.60 H25.2 M24.0 289.56 H25.2 M24.0 292.53 H25.2 M24.0 295.49 H25.2 M22.8 298.45 H25.2 M24.0 301.41 H25.2 M24.0 304.37 H25.2 M24.0 307.34 H25.2 M24.0 310.30 H25.2 M21.0 313.26 H25.2 M24.0 316.22 H25.2 M24.0 319.18 H25.2 M24.0 322.15 H25.2 M24.0 325.11 H25.2 M22.8 328.07 H25.2 M24.0 331.03 H25.2 M24.0 333.99 H25.2 M24.0 336.96 H25.2 M24.0 339.92 H25.2 M21.0 342.88 H25.2 M24.0 345.84 H25.2 M24.0 348.80 H25.2 M24.0 351.77 H25.2 M24.0 354.73 H25.2 M22.8 357.69 H25.2 M24.0 360.65 H25.2 M24.0 363.61 H25.2 M24.0 366.58 H25.2 M24.0 369.54 H25.2 M21.0 372.50 H25.2 M24.0 375.46 H25.2 M24.0 378.42 H25.2 M24.0 381.39 H25.2 M24.0 384.35 H25.2 M22.8 387.31 H25.2 M24.0 390.27 H25.2 M24.0 393.23 H25.2 M24.0 396.20 H25.2 M24.0 399.16 H25.2 M21.0 402.12 H25.2 M24.0 405.08 H25.2 M24.0 408.04 H25.2 M24.0 411.01 H25.2 M24.0 413.97 H25.2 M22.8 416.93 H25.2 M24.0 419.89 H25.2 M24.0 422.85 H25.2 M24.0 425.82 H25.2 M24.0 428.78 H25.2 M21.0 431.74 H25.2 M24.0 434.70 H25.2 M24.0 437.66 H25.2 M24.0 440.63 H25.2 M24.0 443.59 H25.2 M22.8 446.55 H25.2 M24.0 449.51 H25.2 M24.0 452.47 H25.2 M24.0 455.44 H25.2 M24.0 458.40 H25.2" stroke="#b9b9b9" stroke-width="0.5" fill="none" />
<path d="M543.4 72.6 V80.4" stroke="#555" stroke-width="0.7" fill="none" stroke-dasharray="1.2 1"/>
<path d="M17 371 H25.2" stroke="#555" stroke-width="0.7" fill="none" stroke-dasharray="1.2 1"/>
<path d="M19 75 L22.6 78.6 M19 78.6 H21 M19 75 V77" stroke="#9ab" stroke-width="0.6" fill="none" />
<path d="M831.6 86.6 L833.4 84.6 L835.2 86.6" stroke="#555" stroke-width="1" fill="none" />
<path d="M7 65.2 L7 73 L8.8 71.4 L10.2 74.2 L11.4 73.6 L10 70.8 L12.4 70.6 Z" fill="#1e1e1e"/>
<path d="M14.6 75.6 L12.6 75.6 L14.6 73.6 Z" fill="#222"/>
<rect x="4.6" y="78.4" width="11" height="12" fill="#fdfdfd" stroke="#cfcfcf" stroke-width="0.7"/>
<path d="M7.4 80.4 Q6.6 84 8.8 85.6 L12 88.4" stroke="#666" stroke-width="0.8" fill="none" />
<path d="M10.4 85.6 L13.4 88.8 L11.6 88.6 L11 90.2 Z" fill="#222"/><rect x="7" y="84" width="1.6" height="1.6" fill="#222"/>
<path d="M14.6 90 L12.6 90 L14.6 88 Z" fill="#222"/>
<path d="M7.6 100.2 V106.8 H13.6 M5.8 102.2 H11.6 V108.6" stroke="#3b3b3b" stroke-width="1.2" fill="none" />
<path d="M14.4 109.4 L12.4 109.4 L14.4 107.4 Z" fill="#222"/>
<circle cx="8.6" cy="119" r="2.9" stroke="#555" stroke-width="0.9" fill="none"/>
<path d="M10.8 121.2 L13.2 123.8" stroke="#333" stroke-width="1.3" fill="none" />
<path d="M14.8 126 L12.8 126 L14.8 124 Z" fill="#222"/>
<path d="M6.4 136 V142.4 H12.8 M6.4 136 L8 138.2 M6.6 140.4 Q9 137.6 12.4 139.6" stroke="#3b3b3b" stroke-width="0.9" fill="none" />
<path d="M14.6 144.4 L12.6 144.4 L14.6 142.4 Z" fill="#222"/>
<path d="M6.8 151.6 Q9 148.2 10.8 150.6 Q11.6 152.6 9 153.8 Q7 155.4 9.2 157.2 Q11 158 12 156.4" stroke="#3b3b3b" stroke-width="1.1" fill="none" />
<rect x="5.8" y="165.4" width="7.4" height="7.4" stroke="#3b3b3b" stroke-width="0.9" fill="none" />
<path d="M15 175.2 L13 175.2 L15 173.2 Z" fill="#222"/>
<circle cx="9.4" cy="183.6" r="3.8" stroke="#3b3b3b" stroke-width="0.9" fill="none"/>
<path d="M15 189.4 L13 189.4 L15 187.4 Z" fill="#222"/>
<path d="M5.8 194 H13 V199.6 H8.6 L5.8 202.2 Z" stroke="#3b3b3b" stroke-width="0.9" fill="none" />
<path d="M15 203.6 L13 203.6 L15 201.6 Z" fill="#222"/>
<path d="M14.6 222.4 L12.6 222.4 L14.6 220.4 Z" fill="#222"/>
<path d="M5.6 241.6 L12.2 234.4" stroke="#3b3b3b" stroke-width="1" fill="none" />
<path d="M4.8 240.4 L6.8 242.6 M11.2 233.4 L13.2 235.6" stroke="#3b3b3b" stroke-width="0.8" fill="none" />
<path d="M14.8 243.4 L12.8 243.4 L14.8 241.4 Z" fill="#222"/>
<path d="M5.2 249.6 L12.6 257.2" stroke="#b8742a" stroke-width="1.5" fill="none" />
<rect x="4.2" y="248.6" width="2" height="2" fill="#222"/><rect x="11.6" y="256.2" width="2" height="2" fill="#222"/>
<path d="M15.2 260.4 L13.2 260.4 L15.2 258.4 Z" fill="#222"/>
<rect x="5.4" y="267.4" width="6.4" height="6.4" stroke="#3b3b3b" stroke-width="0.9" fill="#f4f4f4" />
<path d="M7 275.2 H13.4 V268.8" stroke="#555" stroke-width="1.3" fill="none" />
<path d="M15 277.6 L13 277.6 L15 275.6 Z" fill="#222"/>
<rect x="5.2" y="281.4" width="8.4" height="8.4" fill="#2a2a2a"/>
<rect x="5.2" y="281.4" width="2.1" height="2.1" fill="#e8e8e8"/>
<rect x="5.2" y="285.6" width="2.1" height="2.1" fill="#e8e8e8"/>
<rect x="7.3" y="283.5" width="2.1" height="2.1" fill="#e8e8e8"/>
<rect x="7.3" y="287.7" width="2.1" height="2.1" fill="#e8e8e8"/>
<rect x="9.4" y="281.4" width="2.1" height="2.1" fill="#e8e8e8"/>
<rect x="9.4" y="285.6" width="2.1" height="2.1" fill="#e8e8e8"/>
<rect x="11.5" y="283.5" width="2.1" height="2.1" fill="#e8e8e8"/>
<rect x="11.5" y="287.7" width="2.1" height="2.1" fill="#e8e8e8"/>
<path d="M5.4 311.2 L10.6 305.4" stroke="#444" stroke-width="1.4" fill="none" />
<path d="M10 303.4 L13 306.4" stroke="#222" stroke-width="1.8" fill="none" />
<path d="M15 312.6 L13 312.6 L15 310.6 Z" fill="#222"/>
<path d="M6 320.6 L9.6 317 L13.4 321 L9.6 325 Z" stroke="#444" stroke-width="0.9" fill="#cfcfcf" />
<path d="M7.4 319.4 L11.6 323.6" stroke="#c0392b" stroke-width="1.1" fill="none" />
<path d="M15 327.6 L13 327.6 L15 325.6 Z" fill="#222"/>
<path d="M5.6 338.6 H13 M6.6 336.8 L9.2 333 L12.2 336.8 Z" stroke="#444" stroke-width="0.9" fill="#e0e0e0" />
<path d="M5.4 340.6 H13.2" stroke="#c0392b" stroke-width="1.3" fill="none" />
<circle cx="8.8" cy="358.4" r="3.2" stroke="#bdbdbd" stroke-width="0.8" fill="none"/>
<path d="M8.8 355.6 V361.2 M6 358.4 H11.6" stroke="#bdbdbd" stroke-width="0.8" fill="none" />
<path d="M965.6 64.6 L967.2 66 L965.6 67.4 M968 64.6 L969.6 66 L968 67.4" stroke="#bdbdbd" stroke-width="0.7" fill="none" />
<path d="M975 64.4 L978 67.6 M978 64.4 L975 67.6" stroke="#c4c4c4" stroke-width="0.7" fill="none" />
<path d="M988.832 67.7376 L991.968 67.7376 L990.4 69.776 Z" fill="#1c1c1c"/>
<path d="M989.4 66.8 L991.6 68.6 L989.4 70.4 Z" fill="#222"/>
<rect x="859.4" y="73.6" width="12.2" height="12.6" fill="#fdfdfd" stroke="#c9c9c9" stroke-width="0.7"/>
<path d="M865.5 76 V84 M861.4 80 H869.6" stroke="#222" stroke-width="1.2" fill="none" />
<path d="M879.2 77.8 A3.4 3.4 0 1 1 878.1 81.2" stroke="#555" stroke-width="0.9" fill="none" />
<path d="M876.4 79.3 L879.7 79.5 L877.9 81.9 Z" fill="#444"/>
<path d="M898.4 76.2 A5.4 4.2 0 0 0 898.4 84.6" stroke="#555" stroke-width="1" fill="none" />
<path d="M892 79.9 H899.6" stroke="#444" stroke-width="0.9" fill="none" />
<path d="M891.6 79.9 L894 78.2 L894 81.6 Z" fill="#444"/>
<rect x="897.4" y="77" width="2.4" height="2.8" fill="#555"/>
<rect x="906.9" y="76.9" width="7.1" height="7.3" stroke="#666" stroke-width="0.9" fill="#c4c4c4" />
<rect x="908.4" y="79.8" width="2.9" height="2.9" fill="#fafafa"/>
<path d="M911.3 81.3 H914.8" stroke="#555" stroke-width="0.9" fill="none" />
<path d="M907.6 76 H913.4" stroke="#999" stroke-width="0.7" fill="none" />
<path d="M922.8 77 H927.4 L930.4 79.6 V84.2 H924.4 Z" stroke="#666" stroke-width="0.9" fill="none" />
<path d="M922.8 77 L924.4 84.2" stroke="#888" stroke-width="0.7" fill="none" />
<rect x="863" y="93.4" width="40.6" height="12.2" fill="#fff" stroke="#dadada" stroke-width="0.7"/>
<rect x="904.4" y="93.4" width="8.8" height="12.2" fill="#f1f1f1" stroke="#dadada" stroke-width="0.7"/>
<path d="M907.568 96.3224 L910.032 96.3224 L908.8 97.924 Z" fill="#1c1c1c"/>
<path d="M907.7 102.8 L909.9 102.8 L908.8 101.4 Z" fill="#222" transform="rotate(180 908.8 102.2)"/>
<path d="M907.7 97.6 L909.9 97.6 L908.8 96.2 Z" fill="#222"/>
<rect x="863" y="108" width="40.6" height="12.2" fill="#fff" stroke="#dadada" stroke-width="0.7"/>
<rect x="904.4" y="108" width="8.8" height="12.2" fill="#f1f1f1" stroke="#dadada" stroke-width="0.7"/>
<path d="M907.7 112.2 L909.9 112.2 L908.8 110.8 Z" fill="#222"/><path d="M907.7 116 L909.9 116 L908.8 117.4 Z" fill="#222"/>
<rect x="869" y="124.6" width="5.6" height="5.8" fill="#fff" stroke="#bdbdbd" stroke-width="0.7"/>
<path d="M870.2 127.6 L871.6 129 L873.8 125.8" stroke="#222" stroke-width="0.9" fill="none" />
<circle cx="871.6" cy="137" r="1.7" stroke="#c2c2c2" stroke-width="0.7" fill="none"/>
<circle cx="871.6" cy="146" r="1.7" stroke="#c2c2c2" stroke-width="0.7" fill="none"/>
<circle cx="871.6" cy="155.2" r="1.7" stroke="#c2c2c2" stroke-width="0.7" fill="none"/>
<circle cx="881.1" cy="137" r="1.7" stroke="#c2c2c2" stroke-width="0.7" fill="none"/>
<circle cx="881.1" cy="146" r="1.7" stroke="#c2c2c2" stroke-width="0.7" fill="none"/>
<rect x="879.1" y="153.2" width="4" height="4" stroke="#c4c4c4" stroke-width="0.6" fill="none" />
<circle cx="890.3" cy="137" r="1.7" stroke="#c2c2c2" stroke-width="0.7" fill="none"/>
<circle cx="890.3" cy="146" r="1.7" stroke="#c2c2c2" stroke-width="0.7" fill="none"/>
<circle cx="890.3" cy="155.2" r="1.7" stroke="#c2c2c2" stroke-width="0.7" fill="none"/>
<path d="M840 161.7 H925" stroke="#e2e2e2" stroke-width="0.7" fill="none" />
<path d="M840 180.8 H925" stroke="#e2e2e2" stroke-width="0.7" fill="none" />
<rect x="868" y="166" width="35.6" height="12.2" fill="#fff" stroke="#dadada" stroke-width="0.7"/>
<rect x="904.4" y="166" width="8.8" height="12.2" fill="#f1f1f1" stroke="#dadada" stroke-width="0.7"/>
<path d="M907.7 170.2 L909.9 170.2 L908.8 168.8 Z" fill="#222"/><path d="M907.7 174 L909.9 174 L908.8 175.4 Z" fill="#222"/>
<rect x="927" y="184.6" width="42.8" height="11.8" fill="#e9e9e9" stroke="#cdcdcd" stroke-width="0.7"/>
<path d="M976.6 73.2 L977.5 75.4 L979.8 75.4 L978 76.8 L978.7 79 L976.6 77.7 L974.5 79 L975.2 76.8 L973.4 75.4 L975.7 75.4 Z" stroke="#333" stroke-width="0.8" fill="none" />
<path d="M974.6 125.4 Q977 122 979.4 125.4 M978.6 122.4 L979.8 123.4" stroke="#555" stroke-width="0.9" fill="none" />
<path d="M974.6 161.6 V166 H979 M976.4 162.6 V166" stroke="#777" stroke-width="0.8" fill="none" />
<path d="M974.6 215.6 V219.6 H979 V217 Q977 215.4 974.6 215.6" stroke="#555" stroke-width="0.8" fill="none" />
<circle cx="975.8" cy="310.4" r="2.6" stroke="#c6c6c6" stroke-width="0.7" fill="none"/>
<path d="M975.8 308.2 V312.6 M973.6 310.4 H978" stroke="#c6c6c6" stroke-width="0.7" fill="none" />
</svg>
<div class="t " style="left:12.8px;top:1.8px;font-size:6.7px;color:#4a4a4a;letter-spacing:-0.3px;">CorelDRAW X8 (64-Bit) - 未命名 -1</div>
<div class="t m" style="left:5.2px;top:12.9px;font-size:6.6px;color:#222;">文件<i>(<u>F</u>)</i></div>
<div class="t m" style="left:35.2px;top:12.9px;font-size:6.6px;color:#222;">编辑<i>(<u>E</u>)</i></div>
<div class="t m" style="left:66px;top:12.9px;font-size:6.6px;color:#222;">视图<i>(<u>V</u>)</i></div>
<div class="t m" style="left:97px;top:12.9px;font-size:6.6px;color:#222;">布局<i>(<u>L</u>)</i></div>
<div class="t m" style="left:128px;top:12.9px;font-size:6.6px;color:#222;">对象<i>(<u>J</u>)</i></div>
<div class="t m" style="left:159px;top:12.9px;font-size:6.6px;color:#222;">效果<i>(<u>C</u>)</i></div>
<div class="t m" style="left:191px;top:12.9px;font-size:6.6px;color:#222;">位图<i>(<u>B</u>)</i></div>
<div class="t m" style="left:222px;top:12.9px;font-size:6.6px;color:#222;">文本<i>(<u>X</u>)</i></div>
<div class="t m" style="left:253px;top:12.9px;font-size:6.6px;color:#222;">表格<i>(<u>T</u>)</i></div>
<div class="t m" style="left:285px;top:12.9px;font-size:6.6px;color:#222;">工具<i>(<u>O</u>)</i></div>
<div class="t m" style="left:316px;top:12.9px;font-size:6.6px;color:#222;">窗口<i>(<u>W</u>)</i></div>
<div class="t m" style="left:349px;top:12.9px;font-size:6.6px;color:#222;">帮助<i>(<u>H</u>)</i></div>
<div class="t " style="left:4.4px;top:46.9px;font-size:6.6px;color:#222;">矩形</div>
<div class="t " style="left:247.6px;top:27.2px;font-size:6.4px;color:#333;letter-spacing:-0.3px;">150%</div>
<div class="t " style="left:362.2px;top:26.8px;font-size:6.8px;color:#1a1a1a;">贴齐<i style="font-style:normal;letter-spacing:-0.4px">(<u>T</u>)</i></div>
<div class="t " style="left:415px;top:46.9px;font-size:6.8px;color:#222;">减少节点</div>
<div class="t " style="left:465px;top:47.4px;font-size:6.4px;color:#333;">0</div>
<div class="t " style="left:28px;top:62.6px;font-size:7px;color:#222;">欢迎屏幕</div>
<div class="t " style="left:68.4px;top:62.7px;font-size:6.8px;color:#222;">未命名 -1</div>
<div class="t " style="left:841px;top:63.4px;font-size:6.6px;color:#333;">变换</div>
<div class="t " style="left:853.4px;top:94.2px;font-size:11.4px;color:#3a3a3a;">X<span style="font-size:5px">:</span></div>
<div class="t " style="left:853.4px;top:109.4px;font-size:11.4px;color:#3a3a3a;">Y<span style="font-size:5px">:</span></div>
<div class="t " style="left:865.4px;top:96.6px;font-size:6.2px;color:#444;">.0 mm</div>
<div class="t " style="left:865.4px;top:111.2px;font-size:6.2px;color:#444;">.0 mm</div>
<div class="t " style="left:876.8px;top:124px;font-size:6.7px;color:#222;">相对位置</div>
<div class="t " style="left:850px;top:168.6px;font-size:6.7px;color:#222;">副本:</div>
<div class="t " style="left:871px;top:168.8px;font-size:6.6px;color:#222;">1</div>
<div class="t " style="left:941.6px;top:187px;font-size:6.7px;color:#333;">应用</div>
<div class="t " style="left:5.2px;top:214px;font-size:8.4px;color:#1e1e1e;font-weight:bold;">字</div>
<div class="t" style="left:979.8px;top:81.6px;font-size:7.2px;color:#222;transform:rotate(90deg);transform-origin:0 0;">插入字符</div>
<div class="t" style="left:979.8px;top:133.4px;font-size:7.2px;color:#222;transform:rotate(90deg);transform-origin:0 0;">变换</div>
<div class="t" style="left:979.8px;top:168.6px;font-size:7.1px;color:#222;transform:rotate(90deg);transform-origin:0 0;">对齐与分布</div>
<div class="t" style="left:979.8px;top:222.4px;font-size:7.1px;color:#222;transform:rotate(90deg);transform-origin:0 0;">圆角/扇形角/倒棱角</div>
<div class="t" style="left:28.1px;top:73.4px;width:12px;text-align:center;font-size:4.2px;color:#9a9a9a;">0</div>
<div class="t" style="left:57.72px;top:73.4px;width:12px;text-align:center;font-size:4.2px;color:#9a9a9a;">10</div>
<div class="t" style="left:87.34px;top:73.4px;width:12px;text-align:center;font-size:4.2px;color:#9a9a9a;">20</div>
<div class="t" style="left:116.96px;top:73.4px;width:12px;text-align:center;font-size:4.2px;color:#9a9a9a;">30</div>
<div class="t" style="left:146.58px;top:73.4px;width:12px;text-align:center;font-size:4.2px;color:#9a9a9a;">40</div>
<div class="t" style="left:176.2px;top:73.4px;width:12px;text-align:center;font-size:4.2px;color:#9a9a9a;">50</div>
<div class="t" style="left:205.82px;top:73.4px;width:12px;text-align:center;font-size:4.2px;color:#9a9a9a;">60</div>
<div class="t" style="left:235.44px;top:73.4px;width:12px;text-align:center;font-size:4.2px;color:#9a9a9a;">70</div>
<div class="t" style="left:265.06px;top:73.4px;width:12px;text-align:center;font-size:4.2px;color:#9a9a9a;">80</div>
<div class="t" style="left:294.68px;top:73.4px;width:12px;text-align:center;font-size:4.2px;color:#9a9a9a;">90</div>
<div class="t" style="left:324.3px;top:73.4px;width:12px;text-align:center;font-size:4.2px;color:#9a9a9a;">100</div>
<div class="t" style="left:353.92px;top:73.4px;width:12px;text-align:center;font-size:4.2px;color:#9a9a9a;">110</div>
<div class="t" style="left:383.54px;top:73.4px;width:12px;text-align:center;font-size:4.2px;color:#9a9a9a;">120</div>
<div class="t" style="left:413.16px;top:73.4px;width:12px;text-align:center;font-size:4.2px;color:#9a9a9a;">130</div>
<div class="t" style="left:442.78px;top:73.4px;width:12px;text-align:center;font-size:4.2px;color:#9a9a9a;">140</div>
<div class="t" style="left:472.4px;top:73.4px;width:12px;text-align:center;font-size:4.2px;color:#9a9a9a;">150</div>
<div class="t" style="left:502.02px;top:73.4px;width:12px;text-align:center;font-size:4.2px;color:#9a9a9a;">160</div>
<div class="t" style="left:531.64px;top:73.4px;width:12px;text-align:center;font-size:4.2px;color:#9a9a9a;">170</div>
<div class="t" style="left:561.26px;top:73.4px;width:12px;text-align:center;font-size:4.2px;color:#9a9a9a;">180</div>
<div class="t" style="left:590.88px;top:73.4px;width:12px;text-align:center;font-size:4.2px;color:#9a9a9a;">190</div>
<div class="t" style="left:620.5px;top:73.4px;width:12px;text-align:center;font-size:4.2px;color:#9a9a9a;">200</div>
<div class="t" style="left:650.12px;top:73.4px;width:12px;text-align:center;font-size:4.2px;color:#9a9a9a;">210</div>
<div class="t" style="left:679.74px;top:73.4px;width:12px;text-align:center;font-size:4.2px;color:#9a9a9a;">220</div>
<div class="t" style="left:709.36px;top:73.4px;width:12px;text-align:center;font-size:4.2px;color:#9a9a9a;">230</div>
<div class="t" style="left:738.98px;top:73.4px;width:12px;text-align:center;font-size:4.2px;color:#9a9a9a;">240</div>
<div class="t" style="left:768.6px;top:73.4px;width:12px;text-align:center;font-size:4.2px;color:#9a9a9a;">250</div>
<div class="t" style="left:798.22px;top:73.4px;width:12px;text-align:center;font-size:4.2px;color:#9a9a9a;">260</div>
<div class="t " style="left:829.6px;top:73.2px;font-size:4px;color:#555;">毫米</div>
<div class="t" style="left:17.4px;top:103.52px;font-size:4.2px;color:#9a9a9a;writing-mode:vertical-rl;transform:rotate(180deg);">190</div>
<div class="t" style="left:17.4px;top:133.14px;font-size:4.2px;color:#9a9a9a;writing-mode:vertical-rl;transform:rotate(180deg);">180</div>
<div class="t" style="left:17.4px;top:162.76px;font-size:4.2px;color:#9a9a9a;writing-mode:vertical-rl;transform:rotate(180deg);">170</div>
<div class="t" style="left:17.4px;top:192.38px;font-size:4.2px;color:#9a9a9a;writing-mode:vertical-rl;transform:rotate(180deg);">160</div>
<div class="t" style="left:17.4px;top:222px;font-size:4.2px;color:#9a9a9a;writing-mode:vertical-rl;transform:rotate(180deg);">150</div>
<div class="t" style="left:17.4px;top:251.62px;font-size:4.2px;color:#9a9a9a;writing-mode:vertical-rl;transform:rotate(180deg);">140</div>
<div class="t" style="left:17.4px;top:281.24px;font-size:4.2px;color:#9a9a9a;writing-mode:vertical-rl;transform:rotate(180deg);">130</div>
<div class="t" style="left:17.4px;top:310.86px;font-size:4.2px;color:#9a9a9a;writing-mode:vertical-rl;transform:rotate(180deg);">120</div>
<div class="t" style="left:17.4px;top:340.48px;font-size:4.2px;color:#9a9a9a;writing-mode:vertical-rl;transform:rotate(180deg);">110</div>
<div class="t" style="left:17.4px;top:370.1px;font-size:4.2px;color:#9a9a9a;writing-mode:vertical-rl;transform:rotate(180deg);">100</div>
<div class="t" style="left:17.4px;top:399.72px;font-size:4.2px;color:#9a9a9a;writing-mode:vertical-rl;transform:rotate(180deg);">90</div>
<div class="t" style="left:17.4px;top:429.34px;font-size:4.2px;color:#9a9a9a;writing-mode:vertical-rl;transform:rotate(180deg);">80</div>
<div class="t " style="left:623.4px;top:11.4px;font-size:8.85px;color:#1b3d7c;font-weight:bold;"><span style="-webkit-text-stroke:0.3px #c9b52e;color:#c9b52e;text-shadow:-0.6px 0 #111,0.6px 0 #111,0 -0.6px #111,0 0.6px #111,-0.5px -0.5px #111,0.5px 0.5px #111,-0.5px 0.5px #111,0.5px -0.5px #111;">我们冲破了</span><span style="color:#1b3d7c;-webkit-text-stroke:0.75px #19386f;text-shadow:-1.1px 0 #d3dfee,1.1px 0 #d3dfee,0 -1.1px #d3dfee,0 1.1px #d3dfee,-0.8px -0.8px #d3dfee,0.8px 0.8px #d3dfee,-0.8px 0.8px #d3dfee,0.8px -0.8px #d3dfee;">心里的最后的防线</span></div>
<div class="t " style="left:759px;top:29.4px;font-size:8.9px;color:#1b3d7c;font-weight:bold;"><span style="-webkit-text-stroke:0.75px #19386f;text-shadow:-1.1px 0 #d3dfee,1.1px 0 #d3dfee,0 -1.1px #d3dfee,0 1.1px #d3dfee,-0.8px -0.8px #d3dfee,0.8px 0.8px #d3dfee,-0.8px 0.8px #d3dfee,0.8px -0.8px #d3dfee;">越过雨雨的终点</span></div>
</body></html>
